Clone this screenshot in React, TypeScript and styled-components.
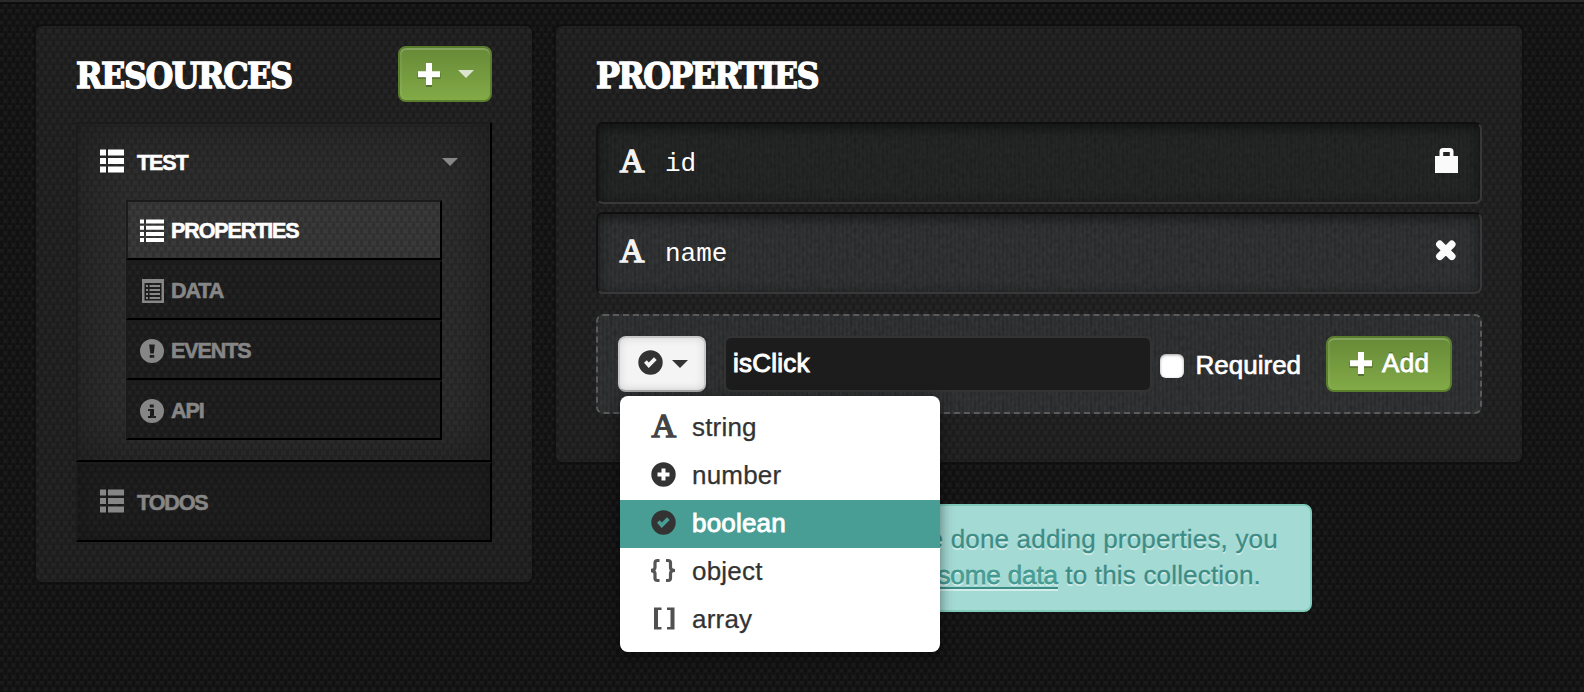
import React from 'react';
import styled, { createGlobalStyle, css } from 'styled-components';

const weave = (a: string, b: string) =>
  `url("data:image/svg+xml,${encodeURIComponent(
    `<svg xmlns='http://www.w3.org/2000/svg' width='8' height='12'><g fill='${a}'><rect x='0' y='1' width='3' height='8' rx='1'/><rect x='4' y='7' width='3' height='5' rx='1'/><rect x='4' y='0' width='3' height='3' rx='1'/></g><g fill='${b}'><rect x='4' y='3' width='3' height='4'/><rect x='0' y='9' width='3' height='3'/></g></svg>`
  )}")`;

const denim = `url("data:image/svg+xml,${encodeURIComponent(
  `<svg xmlns='http://www.w3.org/2000/svg' width='240' height='120'><filter id='n' x='0' y='0' width='100%' height='100%'><feTurbulence type='fractalNoise' baseFrequency='.25 .2' numOctaves='2' seed='4' stitchTiles='stitch'/><feColorMatrix values='0 0 0 0 0  0 0 0 0 0  0 0 0 0 0  .35 0 0 0 -.1'/></filter><rect width='240' height='120' filter='url(#n)'/></svg>`
)}")`;

const stripes =
  'repeating-linear-gradient(90deg, rgba(0,0,0,.09) 0 2px, transparent 2px 4px)';

const Global = createGlobalStyle`
  html, body { margin: 0; background: #141414; }
  body {
    background: ${weave('rgba(0,0,0,.24)', 'rgba(255,255,255,.018)')} #161616;
    font-family: "Liberation Sans", Arial, sans-serif;
    overflow: hidden;
  }
  * { box-sizing: border-box; }
`;

const Page = styled.div`
  height: 692px;
  overflow: hidden;
  border-top: 2px solid #292929;
  box-shadow: inset 0 2px 0 #0d0d0d;
  padding: 24px 0 0 36px;
  display: flex;
  align-items: flex-start;
  gap: 24px;
`;

const Panel = styled.section<{ $w: number; $h: number }>`
  width: ${p => p.$w}px;
  height: ${p => p.$h}px;
  padding: 20px 40px;
  border-radius: 6px;
  background: ${weave('rgba(0,0,0,.14)', 'rgba(255,255,255,.018)')} #212121;
  box-shadow: 0 0 0 2px rgba(0, 0, 0, 0.22), inset 0 0 30px rgba(255, 255, 255, 0.015);
`;

const PanelHead = styled.header`
  display: flex;
  justify-content: space-between;
  height: 76px;
`;

const Title = styled.h1<{ $spacing: number }>`
  margin: 0;
  color: #fff;
  font: bold 35.5px/60px "DejaVu Serif Condensed", "DejaVu Serif", serif;
  font-stretch: condensed;
  letter-spacing: ${p => p.$spacing}px;
  -webkit-text-stroke: 1.3px #fff;
  white-space: nowrap;
`;

const greenButton = css`
  border: 2px solid #5a7d2e;
  border-radius: 8px;
  background: linear-gradient(#678a37, #82aa47);
  box-shadow: inset 0 2px 0 rgba(255, 255, 255, 0.2), inset 2px 0 0 rgba(255, 255, 255, 0.07);
  color: #fff;
  display: flex;
  align-items: center;
  height: 56px;
  padding: 0;
`;

const NewButton = styled.button`
  ${greenButton}
  width: 94px;
  padding: 0 0 1px 17px;
  gap: 17px;
`;

const AddButton = styled.button`
  ${greenButton}
  width: 126px;
  margin-left: 25px;
  padding: 0 0 2px 21px;
  gap: 9px;
  font: 26px "Liberation Sans", Arial, sans-serif;
  letter-spacing: 0.3px;
  -webkit-text-stroke: 0.8px #fff;
  text-shadow: 0 -2px 0 rgba(0, 0, 0, 0.25);
`;

const Caret = styled.i<{ $color: string }>`
  border: 8px solid transparent;
  border-top-color: ${p => p.$color};
  border-bottom: 0;
`;

const bevel = css`
  border: 2px solid #1b1b1b;
  border-right-color: #000;
  border-bottom-color: #000;
`;

const Resource = styled.div<{ $open?: boolean }>`
  ${bevel}
  height: ${p => (p.$open ? 340 : 80)}px;
  background: ${p =>
    p.$open
      ? `${weave('rgba(0,0,0,.13)', 'rgba(255,255,255,.012)')} #2d2d2d`
      : `${weave('rgba(0,0,0,.14)', 'rgba(255,255,255,.012)')} #1d1d1d`};
  box-shadow: ${p =>
    p.$open ? 'inset 0 0 60px rgba(0,0,0,.35)' : 'inset 0 0 20px rgba(0,0,0,.2)'};
`;

const navText = css`
  font-weight: bold;
  font-size: 21.5px;
  letter-spacing: -1.1px;
  -webkit-text-stroke: 0.6px currentColor;
`;

const ResourceHead = styled.div<{ $on?: boolean }>`
  ${navText}
  display: flex;
  align-items: center;
  height: 76px;
  padding: 0 32px 0 22px;
  gap: 13px;
  color: ${p => (p.$on ? '#fff' : '#868686')};
  > svg { margin-top: -2px; }
  > span { flex: 1; padding-top: 2px; }
`;

const SubList = styled.nav`
  width: 316px;
  margin-left: 48px;
`;

const SubItem = styled.div<{ $on?: boolean }>`
  ${navText}
  ${bevel}
  display: flex;
  align-items: center;
  height: 60px;
  padding: 1px 0 0 12px;
  gap: 7px;
  color: ${p => (p.$on ? '#fff' : '#868686')};
  background: ${p => weave('rgba(0,0,0,.13)', 'rgba(255,255,255,.015)') + (p.$on ? ' #373737' : ' #1e1e1e')};
  > span { padding-top: 2px; }
`;

const Property = styled.div<{ $locked?: boolean }>`
  display: flex;
  align-items: center;
  height: 82px;
  margin-bottom: 8px;
  padding: 0 22px 0 21px;
  border: 2px solid #383838;
  border-top-color: #0f0f0f;
  border-left-color: #111;
  border-radius: 7px;
  background: ${stripes}, ${denim} ${p => (p.$locked ? '#262828' : '#333536')};
  box-shadow: inset 0 4px 12px rgba(0, 0, 0, 0.4), inset 0 0 12px rgba(0, 0, 0, 0.15);
  color: #fff;
  > svg { margin-top: -5px; }
`;

const PropertyName = styled.span`
  flex: 1;
  padding: 1px 0 0 20px;
  font: 26px/30px "Liberation Mono", monospace;
`;

const Letter = styled.span<{ $color?: string }>`
  width: 26px;
  text-align: center;
  font: 34px/36px "Liberation Serif", serif;
  color: ${p => p.$color || '#f2f2f2'};
  -webkit-text-stroke: 1.5px ${p => p.$color || '#f2f2f2'};
  margin-top: -5px;
`;

const NewProperty = styled.div`
  position: relative;
  display: flex;
  align-items: center;
  height: 100px;
  margin-top: 20px;
  padding: 0 28px 0 20px;
  border: 2px dashed #5a5a5a;
  border-radius: 7px;
  background: ${stripes}, ${denim} #333536;
  color: #fff;
`;

const TypeButton = styled.button`
  display: flex;
  align-items: center;
  width: 88px;
  height: 56px;
  margin: 0 18px 0 0;
  padding: 0 0 4px 18px;
  gap: 9px;
  border: 2px solid #c8c8c8;
  border-bottom-color: #aaa;
  border-radius: 8px;
  background: #f4f4f4;
  box-shadow: inset 0 0 10px rgba(0, 0, 0, 0.12);
  > i { margin-top: 3px; }
`;

const NameInput = styled.input`
  width: 428px;
  height: 56px;
  padding: 0 7px 2px;
  border: 2px solid #333;
  border-radius: 7px;
  outline: 0;
  background: #1c1c1c;
  color: #fff;
  font: 26px "Liberation Sans", Arial, sans-serif;
  letter-spacing: 0.25px;
  -webkit-text-stroke: 1px #fff;
`;

const Check = styled.input`
  appearance: none;
  width: 24px;
  height: 24px;
  margin: 4px 12px 0 8px;
  border-radius: 6px;
  background: #fff;
  box-shadow: inset 0 1px 3px rgba(0, 0, 0, 0.4);
`;

const CheckLabel = styled.label`
  font-size: 26px;
  padding-top: 2px;
  -webkit-text-stroke: 0.7px #fff;
`;

const Menu = styled.ul`
  position: absolute;
  left: 22px;
  top: 80px;
  z-index: 2;
  width: 320px;
  margin: 0;
  padding: 8px 0;
  list-style: none;
  border-radius: 8px;
  background: #fff;
  box-shadow: 0 4px 14px rgba(0, 0, 0, 0.5);
`;

const MenuItem = styled.li<{ $on?: boolean }>`
  display: flex;
  align-items: center;
  height: 48px;
  padding: 0 0 1px 31px;
  font-size: 26px;
  letter-spacing: 0.2px;
  color: ${p => (p.$on ? '#fff' : '#333')};
  background: ${p => (p.$on ? '#489e95' : 'transparent')};
  -webkit-text-stroke: ${p => (p.$on ? '0.9px #fff' : '0.25px #333')};
`;

const TypeIcon = styled.span`
  display: flex;
  width: 41px;
  height: 30px;
  align-items: center;
  margin-top: -3px;
  > ${Letter} { margin-top: 0; }
`;

const Main = styled.main`
  display: flex;
  flex-direction: column;
  align-items: center;
`;

const Notice = styled.p`
  width: 546px;
  height: 108px;
  margin: 42px 0 0;
  padding: 15px 4px 0 0;
  border: 2px solid #7fcab9;
  border-radius: 8px;
  background: #a4dad4;
  color: #3d8c85;
  font-size: 26px;
  line-height: 36px;
  letter-spacing: 0.18px;
  text-align: center;
  white-space: nowrap;
  text-shadow: 0 2px 0 rgba(255, 255, 255, 0.5);
  -webkit-text-stroke: 0.3px #3d8c85;
`;

const NoticeLine = styled.span<{ $indent?: number }>`
  display: block;
  padding-left: ${p => p.$indent || 0}px;
`;

const NoticeLink = styled.a`
  color: #46a097;
  letter-spacing: -0.1px;
  text-decoration: underline;
  text-decoration-thickness: 2px;
  text-underline-offset: 3px;
`;

const Svg = ({ children, w = 26, h = 26, fill = 'currentColor' }: { children: React.ReactNode; w?: number; h?: number; fill?: string }) => (
  <svg width={w} height={h} viewBox={`0 0 ${w} ${h}`} fill={fill}>
    {children}
  </svg>
);

const ThList = () => (
  <Svg w={24} h={24}>
    <path d="M0 .5h6v6H0zM8 .5h16v6H8zM0 9h6v6H0zM8 9h16v6H8zM0 17.500h6v6H0zM8 17.500h16v6H8z" />
  </Svg>
);

const ListIcon = () => (
  <Svg w={24} h={24}>
    <path d="M0 .5h4v4H0zM6 .5h18v4H6zM0 6.700h4v4H0zM6 6.700h18v4H6zM0 12.900h4v4H0zM6 12.900h18v4H6zM0 19h4v4H0zM6 19h18v4H6z" />
  </Svg>
);

const TableIcon = () => (
  <Svg w={24} h={26}>
    <path fillRule="evenodd" d="M2 1h22v24H2zM4.500 5v17.500h17V5z" />
    <path d="M6 7h2v2H6zM9.500 7H20v2H9.500zM6 11h2v2H6zM9.500 11H20v2H9.500zM6 15h2v2H6zM9.500 15H20v2H9.500zM6 19h2v2H6zM9.500 19H20v2H9.500z" />
  </Svg>
);

const Alert = () => (
  <Svg w={24} h={24}>
    <path fillRule="evenodd" d="M12 0a12 12 0 1 1 0 24 12 12 0 0 1 0-24zM9.200 5.500l1 9h3.600l1-9zM9.700 16v2.800h4.600V16z" />
  </Svg>
);

const Info = () => (
  <Svg w={24} h={24}>
    <path fillRule="evenodd" d="M12 0a12 12 0 1 1 0 24 12 12 0 0 1 0-24zM9.800 5.500v3h4v-3zM8 10v2h2v5H8v2h8v-2h-2v-7z" />
  </Svg>
);

const CheckCircle = () => (
  <Svg w={25} h={25} fill="#333">
    <path fillRule="evenodd" d="M12.500.3a12.200 12.200 0 1 1 0 24.400 12.200 12.200 0 0 1 0-24.400zM6 12.700l4.700 5.300 8-8-2.700-2.700-5.200 5.200-2-2.300z" />
  </Svg>
);

const PlusCircle = () => (
  <Svg w={25} h={25} fill="#333">
    <path fillRule="evenodd" d="M12.500.3a12.200 12.200 0 1 1 0 24.400 12.200 12.200 0 0 1 0-24.400zM10.500 6.500v4h-4v4h4v4h4v-4h4v-4h-4v-4z" />
  </Svg>
);

const Braces = () => (
  <svg width="25" height="25" viewBox="1 0 25 25" fill="none" stroke="#555" strokeWidth="3.200">
    <path d="M9.500 2.500H7.500Q5 2.500 5 5v4.500Q5 12.500 0 12.500Q5 12.500 5 15.500V20q0 2.500 2.500 2.500H9.500M16 2.500h2q2.500 0 2.500 2.500v4.500q0 3 4.500 3q-4.500 0-4.500 3V20q0 2.500-2.500 2.500h-2" />
  </svg>
);

const Brackets = () => (
  <svg width="25" height="25" viewBox="0 0 25 25" fill="#505050">
    <path d="M3 1.500h7.500V4H7v17h3.500v2.500H3zM23.500 1.500H16V4h3.500v17H16v2.500h7.500z" />
  </svg>
);

const PlusIcon = () => (
  <Svg w={24} h={26}>
    <path d="M9 4.500h6v8.300h8.500v6H15V27H9v-8.200H.5v-6H9z" transform="translate(0 -1)" fill="rgba(0,0,0,.3)" />
    <path d="M9 2h6v8.300h8v6h-8V24H9v-7.700H1v-6h8z" fill="#fff" />
  </Svg>
);

const Lock = () => (
  <Svg w={23} h={25}>
    <path fillRule="evenodd" d="M0 8h4.500V3.500Q4.500 0 8 0h7q3.500 0 3.500 3.500V8H23v17H0zM8.200 8h6.600V4H8.200z" fill="#fafafa" />
  </Svg>
);

const Cross = () => (
  <svg width="23" height="25" viewBox="0 0 23 25" fill="none" stroke="#fafafa" strokeLinecap="round">
    <path strokeWidth="7.500" d="M4.800 6.300l12 12M16.800 6.300l-12 12" />
  </svg>
);

const subItems = [
  { label: 'PROPERTIES', icon: <ListIcon />, on: true },
  { label: 'DATA', icon: <TableIcon /> },
  { label: 'EVENTS', icon: <Alert /> },
  { label: 'API', icon: <Info /> },
];

const types = [
  { label: 'string', icon: <Letter $color="#444">A</Letter> },
  { label: 'number', icon: <PlusCircle /> },
  { label: 'boolean', icon: <CheckCircle />, on: true },
  { label: 'object', icon: <Braces /> },
  { label: 'array', icon: <Brackets /> },
];

export default function App() {
  return (
    <>
      <Global />
      <Page>
        <Panel $w={496} $h={556}>
          <PanelHead>
            <Title $spacing={-1.5}>RESOURCES</Title>
            <NewButton>
              <PlusIcon />
              <Caret $color="#dbe5cd" />
            </NewButton>
          </PanelHead>
          <Resource $open>
            <ResourceHead $on>
              <ThList />
              <span>TEST</span>
              <Caret $color="#868686" />
            </ResourceHead>
            <SubList>
              {subItems.map(s => (
                <SubItem key={s.label} $on={s.on}>
                  {s.icon}
                  <span>{s.label}</span>
                </SubItem>
              ))}
            </SubList>
          </Resource>
          <Resource>
            <ResourceHead>
              <ThList />
              <span>TODOS</span>
            </ResourceHead>
          </Resource>
        </Panel>
        <Main>
          <Panel $w={966} $h={436}>
            <PanelHead>
              <Title $spacing={-1.7}>PROPERTIES</Title>
            </PanelHead>
            <Property $locked>
              <Letter>A</Letter>
              <PropertyName>id</PropertyName>
              <Lock />
            </Property>
            <Property>
              <Letter>A</Letter>
              <PropertyName>name</PropertyName>
              <Cross />
            </Property>
            <NewProperty>
              <TypeButton>
                <CheckCircle />
                <Caret $color="#333" />
              </TypeButton>
              <NameInput defaultValue="isClick" />
              <Check type="checkbox" id="required" />
              <CheckLabel htmlFor="required">Required</CheckLabel>
              <AddButton>
                <PlusIcon />
                <span>Add</span>
              </AddButton>
              <Menu>
                {types.map(t => (
                  <MenuItem key={t.label} $on={t.on}>
                    <TypeIcon>{t.icon}</TypeIcon>
                    <span>{t.label}</span>
                  </MenuItem>
                ))}
              </Menu>
            </NewProperty>
          </Panel>
          <Notice>
            <NoticeLine>When you're done adding properties, you</NoticeLine>
            <NoticeLine $indent={7}>
              can enter <NoticeLink>some data</NoticeLink> to this collection.
            </NoticeLine>
          </Notice>
        </Main>
      </Page>
    </>
  );
}
